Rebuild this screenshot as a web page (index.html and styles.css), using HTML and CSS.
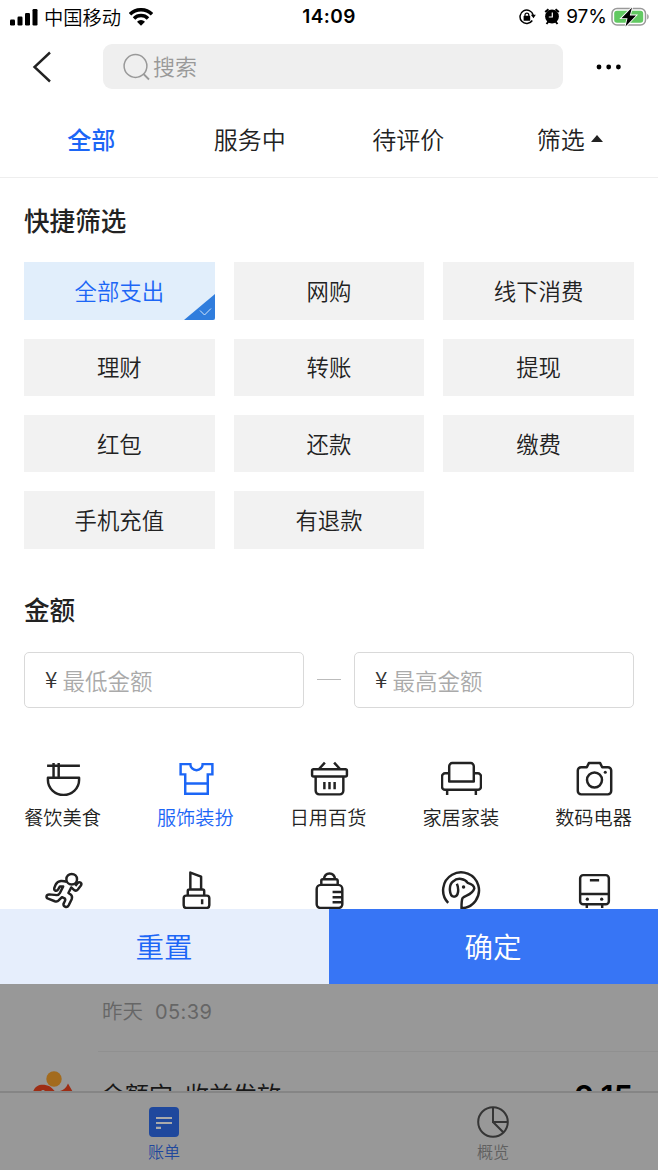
FILE: index.html
```html
<!DOCTYPE html>
<html lang="zh-CN">
<head>
    <meta charset="UTF-8">
    <meta name="viewport" content="width=device-width, initial-scale=1.0">
    <title>账单</title>
    <link rel="stylesheet" href="styles.css">
</head>
<body>
    <div class="status-bar">
        <svg class="signal" width="28" height="18" viewBox="0 0 28 18">
            <rect x="0" y="11.5" width="5" height="6" rx="1.2"/>
            <rect x="7.5" y="8.5" width="5" height="9" rx="1.2"/>
            <rect x="15" y="5" width="5" height="12.5" rx="1.2"/>
            <rect x="22.5" y="1" width="5" height="16.5" rx="1.2"/>
        </svg>
        <span class="carrier">中国移动</span>
        <svg class="wifi" width="24" height="18" viewBox="0 0 24 18">
            <path d="M1 6.200a15.800 15.800 0 0 1 22 0M5 10.500a9.800 9.800 0 0 1 14 0" fill="none" stroke="#000" stroke-width="3.500"/>
            <path d="M8 13.700a5.800 5.800 0 0 1 8 0L12 17.700z"/>
        </svg>
        <span class="clock">14:09</span>
        <div class="status-right">
            <svg width="17" height="16" viewBox="0 0 17 16">
                <path d="M14.200 6A6.700 6.700 0 1 0 13.300 11.500" fill="none" stroke="#000" stroke-width="1.500"/>
                <path d="M11.800 5.800h5l-2.300 3.500z"/>
                <rect x="4.600" y="6.800" width="6.600" height="5" rx=".6"/>
                <path d="M6 7.500V6a1.900 1.900 0 0 1 3.800 0v1.500" fill="none" stroke="#000" stroke-width="1.200"/>
            </svg>
            <svg width="16" height="17" viewBox="0 0 16 17">
                <circle cx="8" cy="8.500" r="6.900"/>
                <path d="M1.200 4L4.500 1.200M14.800 4l-3.300-2.800M2.500 16l2-2.500M13.500 16l-2-2.500" stroke="#000" stroke-width="2"/>
                <path d="M8.300 4.500v4.500H4.800" fill="none" stroke="#fff" stroke-width="1.200"/>
            </svg>
            <span class="percent">97%</span>
            <svg width="39" height="20" viewBox="0 0 39 20">
                <rect x="1" y="1.500" width="33.500" height="16.500" rx="5" fill="#fff" stroke="#999" stroke-width="1.500"/>
                <rect x="3.200" y="3.700" width="29" height="12.100" rx="2.800" fill="#62c962"/>
                <path d="M36.200 7c2 .8 2 4.700 0 5.500z" fill="#999"/>
                <path d="M21 .5L10.500 11.200h6L14.500 19.500L25 8.500H18.800z" stroke="#fff" stroke-width="1.800" paint-order="stroke"/>
            </svg>
        </div>
    </div>

    <div class="header">
        <svg class="back" width="20" height="32" viewBox="0 0 20 32">
            <path d="M18 1.500L2.500 16L18 30.500" fill="none" stroke="#222" stroke-width="2.400"/>
        </svg>
        <div class="search">
            <svg width="28" height="28" viewBox="0 0 28 28">
                <circle cx="12.500" cy="13" r="11.400" fill="none" stroke="#999" stroke-width="1.500"/>
                <path d="M20.500 21l5.500 5.500" stroke="#999" stroke-width="1.800"/>
            </svg>
            <span>搜索</span>
        </div>
        <svg class="more" width="26" height="6" viewBox="0 0 26 6">
            <circle cx="3" cy="3" r="2.400"/>
            <circle cx="12.700" cy="3" r="2.400"/>
            <circle cx="22.400" cy="3" r="2.400"/>
        </svg>
    </div>

    <div class="tabs">
        <div class="tab active">全部</div>
        <div class="tab">服务中</div>
        <div class="tab">待评价</div>
        <div class="tab filter">筛选<span class="arrow"></span></div>
    </div>

    <div class="panel">
        <h3>快捷筛选</h3>
        <div class="options">
            <div class="option selected">全部支出
                <svg class="corner" width="31" height="26" viewBox="0 0 31 26">
                    <path d="M0 26L31 0v24a2 2 0 0 1-2 2z" fill="#307ddd"/>
                    <path d="M16 16.500l4.500 4.500l6.500-6.500" fill="none" stroke="#d5e6fa" stroke-width="1"/>
                </svg>
            </div>
            <div class="option">网购</div>
            <div class="option">线下消费</div>
            <div class="option">理财</div>
            <div class="option">转账</div>
            <div class="option">提现</div>
            <div class="option">红包</div>
            <div class="option">还款</div>
            <div class="option">缴费</div>
            <div class="option">手机充值</div>
            <div class="option">有退款</div>
        </div>

        <h3 class="amount-title">金额</h3>
        <div class="amount">
            <div class="amount-box"><span class="yen">¥</span>最低金额</div>
            <span class="dash"></span>
            <div class="amount-box"><span class="yen">¥</span>最高金额</div>
        </div>

        <div class="categories">
            <div class="category">
                <svg viewBox="0 0 40 40">
                    <path d="M4 6.500h32M10.300 4v14M15.300 4v14M4.800 18.300h30.400v2.200a15.200 14.500 0 0 1-30.400 0z"/>
                </svg>
                <span>餐饮美食</span>
            </div>
            <div class="category active">
                <svg viewBox="0 0 40 40">
                    <path d="M4.500 5H14a6 6 0 0 0 12 0h9.500v10H31v19H9V15H4.500zM9 24h22"/>
                </svg>
                <span>服饰装扮</span>
            </div>
            <div class="category">
                <svg viewBox="0 0 40 40">
                    <rect x="3" y="10" width="34" height="7" rx="1.500"/>
                    <path d="M15.500 3.500L9.500 10M24.500 3.500l6 6.500M6.500 17v14a3.500 3.500 0 0 0 3.500 3.500h20a3.500 3.500 0 0 0 3.500-3.500V17M15 22.500v7M20 22.500v7M25 22.500v7"/>
                </svg>
                <span>日用百货</span>
            </div>
            <div class="category">
                <svg viewBox="0 0 40 40">
                    <path d="M8 22V7a3 3 0 0 1 3-3h18a3 3 0 0 1 3 3v15zM8 14H4a3 3 0 0 0-3 3v10a3 3 0 0 0 3 3h32a3 3 0 0 0 3-3V17a3 3 0 0 0-3-3h-4M6 30v5M34 30v5"/>
                </svg>
                <span>家居家装</span>
            </div>
            <div class="category">
                <svg viewBox="0 0 40 40">
                    <path d="M7 8h5.500l2-4h11l2 4H33a3.300 3.300 0 0 1 3.300 3.300v19.900a3.300 3.300 0 0 1-3.300 3.300H7a3.300 3.300 0 0 1-3.300-3.300V11.300A3.300 3.300 0 0 1 7 8z"/>
                    <circle cx="20" cy="20.500" r="7.300"/>
                    <circle class="dot" cx="30.500" cy="13" r="1.500"/>
                </svg>
                <span>数码电器</span>
            </div>
            <div class="category">
                <svg viewBox="0 0 40 40">
                    <circle cx="28" cy="9" r="5.200"/>
                    <path d="M23.200 11.500Q20 10.500 17.500 10.700Q14 11 12.500 14L11 17.500C10.500 20.500 13.500 21.300 14.800 19L16.500 16H19.700L16.500 22.500Q15.500 24.500 13.500 24.500L6 23.800C3 23.800 2.500 27 5 28L11.500 30.500Q14 31.300 15.500 29.500L18.500 26.500L21.500 28Q22 29 21.500 30L20 33C19.500 36 23.500 37.200 25 34.500L28 28.500Q29 25.500 27 24L24.800 22.500L27.500 17L30.500 19.700Q32.500 20.800 34 19L37 15.200C38.500 12.500 35.500 10.800 33.700 12.800L31.500 15.500"/>
                </svg>
            </div>
            <div class="category">
                <svg viewBox="0 0 40 40">
                    <path d="M14 19V2.500l10.500 4V19M11.500 25v-4.500a1.500 1.500 0 0 1 1.500-1.500h13a1.500 1.500 0 0 1 1.500 1.500V25M10 25h20a2.500 2.500 0 0 1 2.500 2.500V34.500a2.500 2.500 0 0 1-2.500 2.500H10A2.500 2.500 0 0 1 7.500 34.500v-7A2.500 2.500 0 0 1 10 25zM25.500 28.500v5"/>
                </svg>
            </div>
            <div class="category">
                <svg viewBox="0 0 40 40">
                    <path d="M14.500 9C15.500 1.500 24.500 1.500 25.500 9M12 14.500v-4A1.500 1.500 0 0 1 13.500 9h13A1.500 1.500 0 0 1 28 10.500v4M11.500 14.500h17a4 4 0 0 1 4 4v15a3.500 3.500 0 0 1-3.500 3.500H11a3.500 3.500 0 0 1-3.500-3.500v-15a4 4 0 0 1 4-4zM32.500 21.500H23M32.500 26.500H23M32.500 31.500H23"/>
                </svg>
            </div>
            <div class="category">
                <svg viewBox="0 0 40 40">
                    <path d="M7 32A17.500 17.500 0 1 1 20 37.300c0-5 0-8 1-9.800c2-3 9.500-2.500 11.500-9.500c0-3-3-4.500-6.500-5.500c-2.500-4-10-5.500-14-1.500C7 14.500 8 25.500 12.500 26c5 0 5-8 3-12.500"/>
                    <circle class="dot" cx="22" cy="16.500" r="1.700"/>
                </svg>
            </div>
            <div class="category">
                <svg viewBox="0 0 40 40">
                    <rect x="6" y="5" width="28" height="28.500" rx="3"/>
                    <path d="M6 23.500h28M15.500 10h9M12.500 34v3M27.500 34v3"/>
                    <circle class="dot" cx="13" cy="28.500" r="1.600"/>
                    <circle class="dot" cx="27" cy="28.500" r="1.600"/>
                </svg>
            </div>
        </div>
    </div>

    <div class="actions">
        <div class="reset">重置</div>
        <div class="confirm">确定</div>
    </div>

    <!-- bill list under the mask -->
    <div class="list">
        <div class="bill">
            <div class="bill-type">投资理财</div>
            <div class="bill-time"><span>昨天</span><span class="time">05:39</span></div>
        </div>
        <div class="bill-next">
            <svg class="bill-icon" width="44" height="44" viewBox="0 0 44 44">
                <circle cx="22" cy="8" r="7.700" fill="#a36b1d"/>
                <path d="M0 26C1 13 10 12 18 15.500c4 3 7 7 8 11V44H0z" fill="#9e2d14"/>
                <path d="M28 20c4-1 6-3 8-7.500l8 14V44H28z" fill="#9e2d14"/>
                <circle cx="11" cy="21" r="2" fill="#989898"/>
            </svg>
            <span class="bill-name">余额宝<span class="hyphen">-</span>收益发放</span>
            <span class="bill-sum">0.15</span>
        </div>
    </div>

    <div class="tabbar">
        <div class="tabbar-item current">
            <svg width="32" height="32" viewBox="0 0 32 32">
                <rect x="1" y="1" width="30" height="30" rx="4" fill="#1f489d"/>
                <path d="M8 12h16M8 17h16M8 21.800h5" stroke="#aaa" stroke-width="2.200"/>
            </svg>
            <span>账单</span>
        </div>
        <div class="tabbar-item">
            <svg width="32" height="32" viewBox="0 0 32 32" fill="none" stroke="#353535" stroke-width="2">
                <circle cx="16" cy="16" r="14.800"/>
                <path d="M16 1.500V16h14.500M16 16l10.500 10.500"/>
            </svg>
            <span>概览</span>
        </div>
    </div>
</body>
</html>
```
FILE: styles.css
```css
* { box-sizing: border-box; }
body { margin: 0; width: 658px; height: 1170px; overflow: hidden; background: #fff; color: #222; font-family: "Liberation Sans", "Noto Sans CJK SC", sans-serif; font-weight: 350; }
svg { display: block; flex: none; }

.status-bar { position: relative; display: flex; align-items: center; height: 33px; padding: 0 8px 0 10px; color: #000; }
.carrier { margin: 0 8px 0 6px; font-size: 19.3px; font-weight: 350; }
.clock { position: absolute; left: 0; right: 0; text-align: center; font-family: Inter, sans-serif; font-size: 19px; font-weight: 600; letter-spacing: .4px; }
.status-right { display: flex; align-items: center; margin-left: auto; }
.status-right svg + svg { margin-left: 8px; }
.percent { margin: 0 4px 0 6px; font-family: Inter, sans-serif; font-size: 19px; font-weight: 400; }

.header { display: flex; align-items: center; height: 67px; padding: 0 36px 0 32px; }
.search { display: flex; align-items: center; width: 460px; height: 45px; margin-left: 51px; padding-left: 20px; border-radius: 9px; background: #efefef; color: #999; font-size: 22px; }
.search span { margin: 0 0 3px 2px; }
.more { margin-left: auto; }

.tabs { display: grid; grid-template-columns: repeat(4, 1fr); height: 78px; padding: 0 12px; border-bottom: 1px solid #eee; }
.tab { display: flex; align-items: center; justify-content: center; font-size: 24px; }
.tab.active { color: #1c66f6; font-weight: 500; }
.filter { padding-left: 6px; }
.arrow { margin-left: 6px; border: 6px solid transparent; border-top: 0; border-bottom: 7px solid #222; }

.panel { height: 731px; padding: 0 24px; overflow: hidden; }
h3 { margin: 0; padding-top: 26px; font-size: 25.6px; line-height: 37px; font-weight: 500; }
.options { display: grid; grid-template-columns: repeat(3, 1fr); grid-auto-rows: 57.4px; gap: 18.9px; margin-top: 21.4px; }
.option { position: relative; display: flex; align-items: center; justify-content: center; padding-bottom: 2px; background: #f2f2f2; font-size: 22.4px; }
.option.selected { background: #e1eefb; color: #1c66f6; }
.corner { position: absolute; right: 0; bottom: 0; }

.amount-title { padding-top: 44px; }
.amount { display: flex; align-items: center; justify-content: space-between; margin-top: 22px; }
.amount-box { display: flex; align-items: center; width: 280px; height: 56px; padding-left: 20px; border: 1px solid #d9d9d9; border-radius: 5px; color: #aaa; font-size: 22.5px; }
.yen { width: 17.5px; margin-bottom: 3px; color: #333; font-family: "Noto Sans CJK SC", sans-serif; }
.dash { width: 24px; height: 1px; background: #bbb; }

.categories { display: grid; grid-template-columns: repeat(5, 77px); justify-content: space-between; row-gap: 36px; margin: 51px 2px 0 0; }
.category { display: flex; flex-direction: column; align-items: center; font-size: 19.2px; line-height: 30px; white-space: nowrap; }
.category svg { width: 41px; height: 41px; margin-left: 2px; fill: none; stroke: #222; stroke-width: 2.4; stroke-linejoin: round; }
.category .dot { fill: #222; stroke: none; }
.category span { margin-top: 4px; }
.category.active { color: #1c66f6; }
.category.active svg { stroke: #1c66f6; stroke-linejoin: miter; }

.actions { display: flex; height: 75px; }
.reset, .confirm { flex: 1; display: flex; align-items: center; justify-content: center; padding: 0 1px 2px 0; font-size: 28.5px; }
.reset { background: #e6eefc; color: #1c66f6; }
.confirm { background: #3775f5; color: #fff; }

.list { height: 107px; background: #989898; overflow: hidden; }
.bill { height: 68px; margin-left: 98px; padding-left: 4px; border-bottom: 1px solid #909090; }
.bill-type { display: flex; align-items: flex-end; height: 6px; font-size: 20.5px; line-height: 30px; color: #747474; }
.bill-time { display: flex; align-items: center; margin-top: 7px; font-size: 20.5px; line-height: 30px; color: #666; }
.time { margin-left: 12px; font-family: Inter, sans-serif; font-size: 20px; font-weight: 400; letter-spacing: .4px; }
.bill-next { display: flex; align-items: flex-start; padding: 19px 25px 0 32px; color: #171717; }
.bill-name { margin: 7px 0 0 25px; font-size: 24px; line-height: 36px; font-weight: 400; }
.hyphen { display: inline-block; width: 12px; text-align: center; }
.bill-sum { margin: 8px 0 0 auto; font-family: Inter, sans-serif; font-size: 31px; line-height: 36px; font-weight: 600; color: #000; }

.tabbar { display: flex; height: 79px; background: #989898; border-top: 2px solid #858585; }
.tabbar-item { flex: 1; display: flex; flex-direction: column; align-items: center; padding: 13px 1px 0 0; font-size: 16px; line-height: 24px; color: #606060; }
.tabbar-item span { margin-top: 3px; }
.current { color: #1f489d; }
```
